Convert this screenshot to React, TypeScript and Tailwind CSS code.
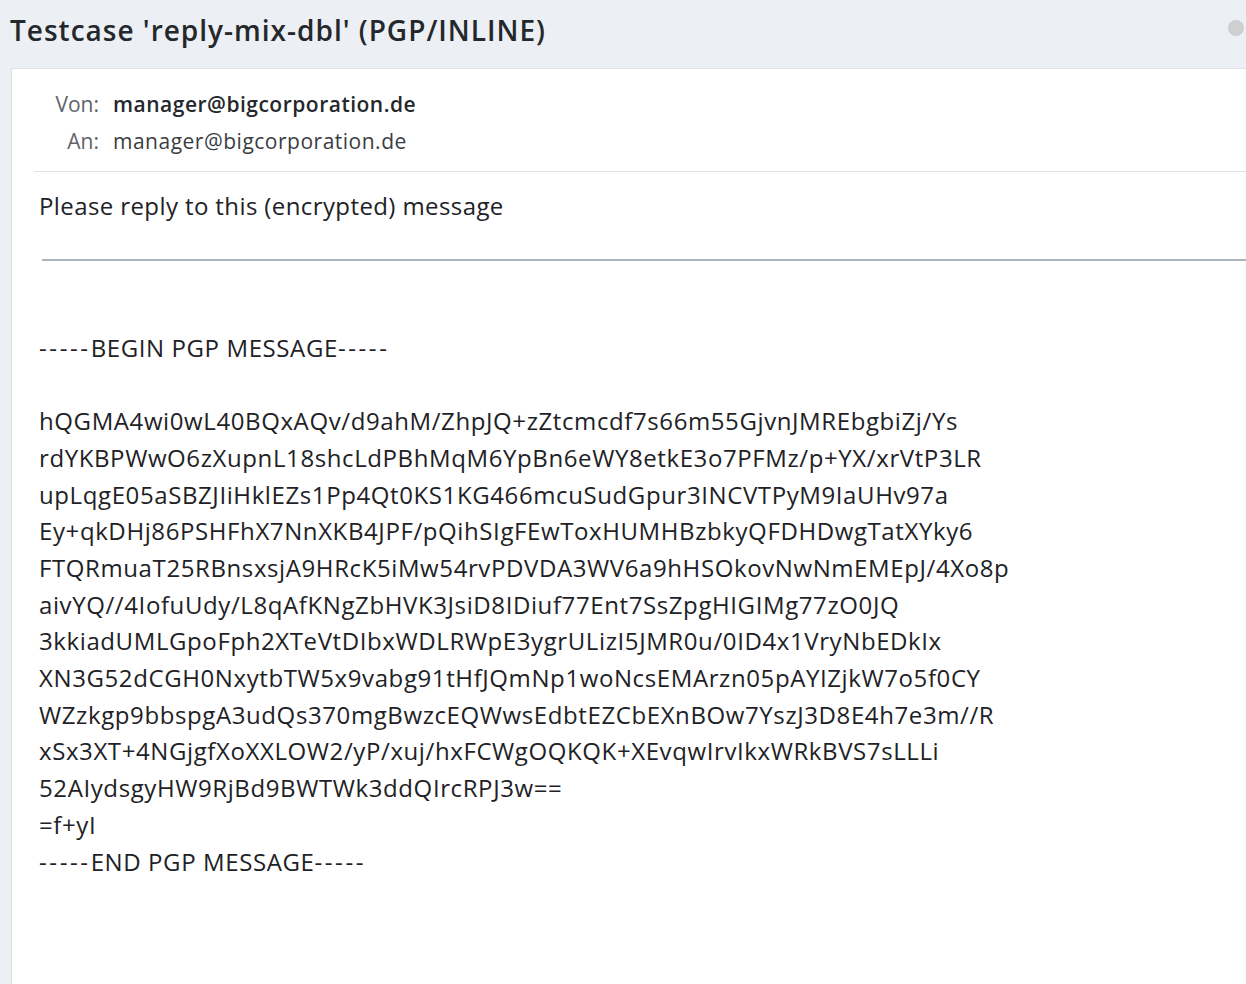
const lines = [
  "hQGMA4wi0wL40BQxAQv/d9ahM/ZhpJQ+zZtcmcdf7s66m55GjvnJMREbgbiZj/Ys",
  "rdYKBPWwO6zXupnL18shcLdPBhMqM6YpBn6eWY8etkE3o7PFMz/p+YX/xrVtP3LR",
  "upLqgE05aSBZJIiHklEZs1Pp4Qt0KS1KG466mcuSudGpur3INCVTPyM9IaUHv97a",
  "Ey+qkDHj86PSHFhX7NnXKB4JPF/pQihSIgFEwToxHUMHBzbkyQFDHDwgTatXYky6",
  "FTQRmuaT25RBnsxsjA9HRcK5iMw54rvPDVDA3WV6a9hHSOkovNwNmEMEpJ/4Xo8p",
  "aivYQ//4IofuUdy/L8qAfKNgZbHVK3JsiD8IDiuf77Ent7SsZpgHIGIMg77zO0JQ",
  "3kkiadUMLGpoFph2XTeVtDIbxWDLRWpE3ygrULizI5JMR0u/0ID4x1VryNbEDkIx",
  "XN3G52dCGH0NxytbTW5x9vabg91tHfJQmNp1woNcsEMArzn05pAYIZjkW7o5f0CY",
  "WZzkgp9bbspgA3udQs370mgBwzcEQWwsEdbtEZCbEXnBOw7YszJ3D8E4h7e3m//R",
  "xSx3XT+4NGjgfXoXXLOW2/yP/xuj/hxFCWgOQKQK+XEvqwIrvIkxWRkBVS7sLLLi",
  "52AIydsgyHW9RjBd9BWTWk3ddQIrcRPJ3w==",
  "=f+yI",
];

function Dashes() {
  return <span className="tracking-[2.6px]">-----</span>;
}

export default function App() {
  return (
    <div
      className="min-h-[984px] bg-[#eceff3] overflow-hidden"
      style={{ fontFamily: '"Open Sans", sans-serif' }}
    >
      <div className="flex items-center justify-between h-[60px] pl-[10px]">
        <h1 className="text-[28px] font-semibold text-[#24282c] tracking-[1px]">
          Testcase 'reply-mix-dbl' (PGP/INLINE)
        </h1>
        <div className="w-[16px] h-[16px] rounded-full bg-[#cdcfd1] mr-[2px] mt-[-5px]" />
      </div>
      <div className="ml-[11px] mt-[8px] bg-white border-l border-t border-[#dde1e5] rounded-tl-[3px] min-h-[920px]">
        <div className="pl-[22px] pt-[20px]">
          <div className="grid grid-cols-[65px_1fr] gap-x-[14px] gap-y-[6px] text-[21px] leading-[31px] tracking-[0.5px] pb-[14px]">
            <span className="text-right text-[#5f6368] tracking-normal">Von:</span>
            <span className="font-semibold text-[#24282c]">manager@bigcorporation.de</span>
            <span className="text-right text-[#5f6368] tracking-normal">An:</span>
            <span className="text-[#3a3e42]">manager@bigcorporation.de</span>
          </div>
          <div className="border-t border-[#e0e3e7]" />
        </div>
        <div className="pl-[27px] pt-[16px] text-[24px] leading-[36.7px] tracking-[0.6px] text-[#1e2226]">
          <p className="tracking-[0.4px]">Please reply to this (encrypted) message</p>
          <div className="h-[2px] bg-[#aeb5bd] ml-[3px] mt-[34px]" />
          <div className="h-[69px]" />
          <p>
            <Dashes />BEGIN PGP MESSAGE<Dashes />
          </p>
          <div className="h-[36.7px]" />
          {lines.map((l) => (
            <p key={l}>{l}</p>
          ))}
          <p>
            <Dashes />END PGP MESSAGE<Dashes />
          </p>
        </div>
      </div>
    </div>
  );
}
